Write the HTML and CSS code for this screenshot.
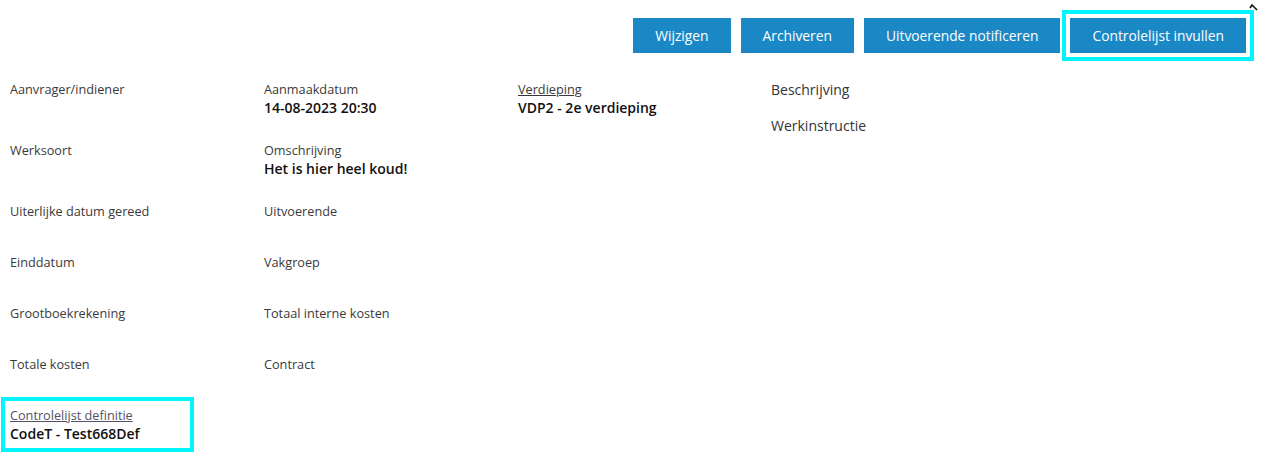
FILE: index.html
```html
<!DOCTYPE html>
<html lang="nl">
<head>
  <meta charset="UTF-8" />
  <meta name="viewport" content="width=device-width, initial-scale=1.0"/>
  <title>Melding details</title>
  <link rel="stylesheet" href="styles.css">
</head>
<body>
  <div class="page">
    <div class="actions">
      <button class="action-btn">Wijzigen</button>
      <button class="action-btn">Archiveren</button>
      <button class="action-btn">Uitvoerende notificeren</button>
      <button class="action-btn focused">Controlelijst invullen</button>
    </div>
    <svg class="corner-caret" width="10" height="10" viewBox="0 0 10 10">
      <polyline points="1,6 3,3 8,8" fill="none" stroke="#111" stroke-width="1.6"/>
    </svg>

    <div class="details">
      <div class="field"><div class="label">Aanvrager/indiener</div><div class="value"></div></div>
      <div class="field"><div class="label">Aanmaakdatum</div><div class="value">14-08-2023 20:30</div></div>
      <div class="field"><a class="label link" href="#">Verdieping</a><div class="value">VDP2 - 2e verdieping</div></div>
      <div class="side">
        <div class="side-item">Beschrijving</div>
        <div class="side-item">Werkinstructie</div>
      </div>

      <div class="field"><div class="label">Werksoort</div><div class="value"></div></div>
      <div class="field"><div class="label">Omschrijving</div><div class="value">Het is hier heel koud!</div></div>
      <div class="field empty-col"></div>

      <div class="field"><div class="label">Uiterlijke datum gereed</div><div class="value"></div></div>
      <div class="field"><div class="label">Uitvoerende</div><div class="value"></div></div>
      <div class="field empty-col"></div>
      <div class="field empty-col"></div>

      <div class="field"><div class="label">Einddatum</div><div class="value"></div></div>
      <div class="field"><div class="label">Vakgroep</div><div class="value"></div></div>
      <div class="field empty-col"></div>
      <div class="field empty-col"></div>

      <div class="field"><div class="label">Grootboekrekening</div><div class="value"></div></div>
      <div class="field"><div class="label">Totaal interne kosten</div><div class="value"></div></div>
      <div class="field empty-col"></div>
      <div class="field empty-col"></div>

      <div class="field"><div class="label">Totale kosten</div><div class="value"></div></div>
      <div class="field"><div class="label">Contract</div><div class="value"></div></div>
      <div class="field empty-col"></div>
      <div class="field empty-col"></div>

      <div class="field highlight"><a class="label link muted" href="#">Controlelijst definitie</a><div class="value">CodeT - Test668Def</div></div>
    </div>
  </div>
</body>
</html>
```

FILE: styles.css
```css
body {
  margin: 0;
  font-family: 'Open Sans', sans-serif;
  background-color: #ffffff;
  color: #111;
}

.page {
  position: relative;
  padding: 0 10px 20px;
}

.actions {
  display: flex;
  justify-content: flex-end;
  gap: 10px;
  padding-top: 18px;
  padding-right: 11px;
}

.action-btn {
  height: 35px;
  padding: 0 22px;
  background-color: #1b88c6;
  color: #ffffff;
  border: none;
  border-radius: 0;
  font-family: 'Open Sans', sans-serif;
  font-size: 13.8px;
  cursor: pointer;
}

.action-btn.focused {
  outline: 4px solid #00f6ff;
  outline-offset: 4px;
}

.corner-caret {
  position: absolute;
  top: 2px;
  right: 8px;
}

.details {
  display: grid;
  grid-template-columns: 254px 254px 253px 1fr;
  row-gap: 23px;
  margin-top: 27px;
  align-items: start;
}

.field {
  display: flex;
  flex-direction: column;
}

.label {
  font-size: 12.7px;
  line-height: 18px;
  color: #3a3a3a;
}

.link {
  text-decoration: underline;
  align-self: flex-start;
}

.muted {
  color: #55506a;
}

.value {
  min-height: 10px;
  font-size: 14px;
  line-height: 20px;
  font-weight: 600;
  color: #111;
}

.side {
  grid-row: span 2;
  display: flex;
  flex-direction: column;
  gap: 17px;
}

.side-item {
  font-size: 14px;
  line-height: 19px;
  color: #333;
}

.highlight {
  width: 175px;
  margin: -5px -5px 0;
  padding: 5px 5px 4px;
  outline: 4px solid #00f6ff;
}
```
